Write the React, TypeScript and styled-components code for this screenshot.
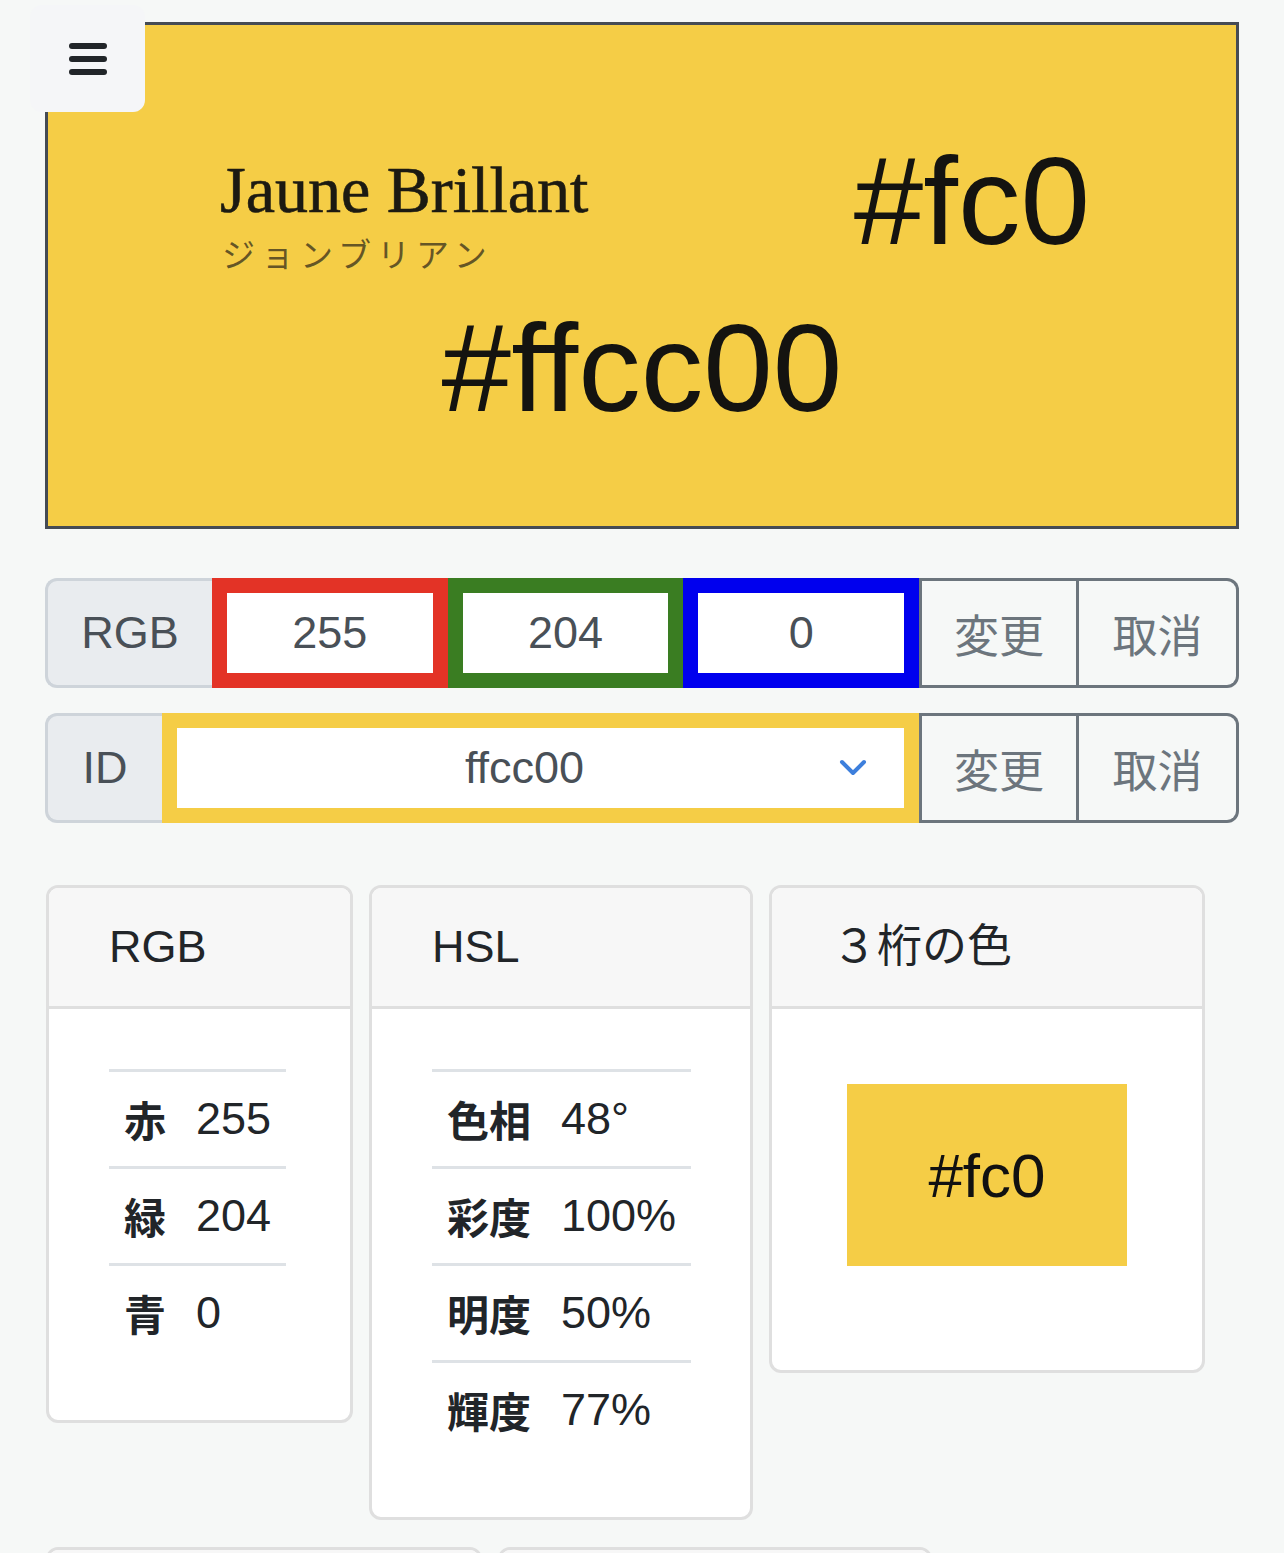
import React from 'react'
import styled, { createGlobalStyle } from 'styled-components'

const GlobalStyle = createGlobalStyle`
  html, body {
    margin: 0;
    padding: 0;
    background: #f6f8f7;
  }
  body {
    font-family: 'Liberation Sans', 'Noto Sans CJK JP', sans-serif;
    color: #212529;
  }
  * {
    box-sizing: border-box;
  }
`

const YELLOW = '#f5cd46'

const Page = styled.div`
  position: relative;
  padding: 22px 45px 0 46px;
  min-height: 1553px;
  overflow: hidden;
`

const MenuButton = styled.button`
  position: absolute;
  top: 5px;
  left: 30px;
  width: 115px;
  height: 107px;
  border: none;
  border-radius: 12px;
  background: #f5f6f8;
  display: flex;
  align-items: center;
  justify-content: center;
  padding: 0;
  z-index: 2;
`

const Hero = styled.section`
  margin-left: -1px;
  background: ${YELLOW};
  border: 3px solid #454b54;
  padding: 114px 146px 96px 172px;
  color: #141310;
`

const HeroTop = styled.div`
  display: flex;
  justify-content: space-between;
  align-items: flex-start;
`

const NameBlock = styled.div`
  margin-top: 18px;
  display: flex;
  flex-direction: column;
`

const EnName = styled.div`
  font-family: 'Liberation Serif', 'DejaVu Serif', serif;
  font-size: 66px;
  line-height: 66px;
  color: #1c1a12;
  -webkit-text-stroke: 0.6px #1c1a12;
`

const JaName = styled.div`
  margin-top: 13px;
  margin-left: 2px;
  font-family: 'Noto Sans CJK JP', sans-serif;
  font-size: 33px;
  line-height: 34px;
  letter-spacing: 6px;
  color: rgba(45, 40, 25, 0.72);
`

const HexText = styled.div<{ center?: boolean }>`
  font-family: 'Liberation Sans', sans-serif;
  font-size: 125px;
  line-height: 124px;
  text-align: ${({ center }) => (center ? 'center' : 'left')};
  margin-top: ${({ center }) => (center ? '36px' : '0')};
  margin-right: ${({ center }) => (center ? '-146px' : '0')};
  margin-left: ${({ center }) => (center ? '-172px' : '0')};
`

const Controls = styled.div`
  margin-top: 49px;
  margin-left: -1px;
  display: flex;
  flex-direction: column;
  gap: 25px;
`

const InputGroup = styled.div`
  display: flex;
  height: 110px;
`

const GroupLabel = styled.span<{ w: number }>`
  flex: 0 0 ${({ w }) => w}px;
  display: flex;
  align-items: center;
  justify-content: center;
  background: #e9ecef;
  border: 3px solid #ced4da;
  border-right: none;
  border-radius: 12px 0 0 12px;
  font-size: 45px;
  color: #495057;
`

const ColorInput = styled.input<{ c: string }>`
  flex: 1 1 0;
  min-width: 0;
  height: 110px;
  border: 15px solid ${({ c }) => c};
  background: #fff;
  padding: 0;
  text-align: center;
  font-family: 'Liberation Sans', sans-serif;
  font-size: 45px;
  color: #495057;
  outline: none;
`

const SelectBox = styled.div`
  flex: 1 1 0;
  position: relative;
  border: 15px solid ${YELLOW};
  background: #fff;
  padding-right: 32px;
  display: flex;
  align-items: center;
  justify-content: center;
  font-size: 45px;
  color: #495057;
`

const Chevron = styled.svg`
  position: absolute;
  right: 37px;
  top: 50%;
  transform: translateY(-50%);
`

const GroupButton = styled.button<{ last?: boolean }>`
  flex: 0 0 160px;
  height: 110px;
  border: 3px solid #6c757d;
  border-left: ${({ last }) => (last ? 'none' : '3px solid #6c757d')};
  border-radius: ${({ last }) => (last ? '0 12px 12px 0' : '0')};
  background: transparent;
  color: #6c757d;
  font-family: 'Liberation Sans', 'Noto Sans CJK JP', sans-serif;
  font-size: 45px;
  padding: 0;
`

const CardRow = styled.div`
  margin-top: 62px;
  display: flex;
  flex-wrap: wrap;
  column-gap: 16px;
  row-gap: 27px;
  align-items: flex-start;
`

const Card = styled.div<{ w: number }>`
  width: ${({ w }) => w}px;
  background: #fff;
  border: 3px solid #dfdfdf;
  border-radius: 12px;
  overflow: hidden;
`

const CardHeader = styled.div`
  min-height: 121px;
  background: #f7f7f7;
  border-bottom: 3px solid #dfdfdf;
  padding: 36px 60px;
  font-size: 45px;
  line-height: 46px;
  color: #212529;
`

const CardBody = styled.div`
  padding: 60px;
`

const Table = styled.table`
  border-collapse: collapse;
  font-size: 45px;
  line-height: 64px;
  color: #212529;

  td {
    padding: 15px;
    border-top: 3px solid #dee2e6;
    white-space: nowrap;
  }
`

const LabelCell = styled.td`
  font-family: 'Noto Sans CJK JP', sans-serif;
  font-weight: 700;
  font-size: 42px;
`

const Swatch = styled.div`
  margin: 15px 15px 44px;
  height: 182px;
  background: ${YELLOW};
  display: flex;
  align-items: center;
  justify-content: center;
  font-family: 'Liberation Sans', sans-serif;
  font-size: 62px;
  color: #111;
`

const rgbRows = [
  ['赤', '255'],
  ['緑', '204'],
  ['青', '0'],
]

const hslRows = [
  ['色相', '48°'],
  ['彩度', '100%'],
  ['明度', '50%'],
  ['輝度', '77%'],
]

function ValueTable({ rows }: { rows: string[][] }) {
  return (
    <Table>
      <tbody>
        {rows.map(([label, value]) => (
          <tr key={label}>
            <LabelCell>{label}</LabelCell>
            <td>{value}</td>
          </tr>
        ))}
      </tbody>
    </Table>
  )
}

export default function App() {
  return (
    <>
      <GlobalStyle />
      <Page>
        <MenuButton aria-label="menu">
          <svg width="38" height="32" viewBox="0 0 38 32">
            <rect x="0" y="0" width="38" height="6" rx="3" fill="#212529" />
            <rect x="0" y="13" width="38" height="6" rx="3" fill="#212529" />
            <rect x="0" y="26" width="38" height="6" rx="3" fill="#212529" />
          </svg>
        </MenuButton>

        <Hero>
          <HeroTop>
            <NameBlock>
              <EnName>Jaune Brillant</EnName>
              <JaName>ジョンブリアン</JaName>
            </NameBlock>
            <HexText>#fc0</HexText>
          </HeroTop>
          <HexText center>#ffcc00</HexText>
        </Hero>

        <Controls>
          <InputGroup>
            <GroupLabel w={167}>RGB</GroupLabel>
            <ColorInput c="#e33326" defaultValue="255" />
            <ColorInput c="#3a7d22" defaultValue="204" />
            <ColorInput c="#0000ee" defaultValue="0" />
            <GroupButton>変更</GroupButton>
            <GroupButton last>取消</GroupButton>
          </InputGroup>
          <InputGroup>
            <GroupLabel w={117}>ID</GroupLabel>
            <SelectBox>
              ffcc00
              <Chevron width="28" height="18" viewBox="0 0 28 18">
                <path d="M3 3 L14 14 L25 3" fill="none" stroke="#3d7fdc" strokeWidth="4" strokeLinecap="round" strokeLinejoin="round" />
              </Chevron>
            </SelectBox>
            <GroupButton>変更</GroupButton>
            <GroupButton last>取消</GroupButton>
          </InputGroup>
        </Controls>

        <CardRow>
          <Card w={307}>
            <CardHeader>RGB</CardHeader>
            <CardBody>
              <ValueTable rows={rgbRows} />
            </CardBody>
          </Card>
          <Card w={384}>
            <CardHeader>HSL</CardHeader>
            <CardBody>
              <ValueTable rows={hslRows} />
            </CardBody>
          </Card>
          <Card w={436}>
            <CardHeader>３桁の色</CardHeader>
            <CardBody>
              <Swatch>#fc0</Swatch>
            </CardBody>
          </Card>
          <Card w={436}>
            <CardHeader />
            <CardBody />
          </Card>
          <Card w={434}>
            <CardHeader />
            <CardBody />
          </Card>
        </CardRow>
      </Page>
    </>
  )
}
